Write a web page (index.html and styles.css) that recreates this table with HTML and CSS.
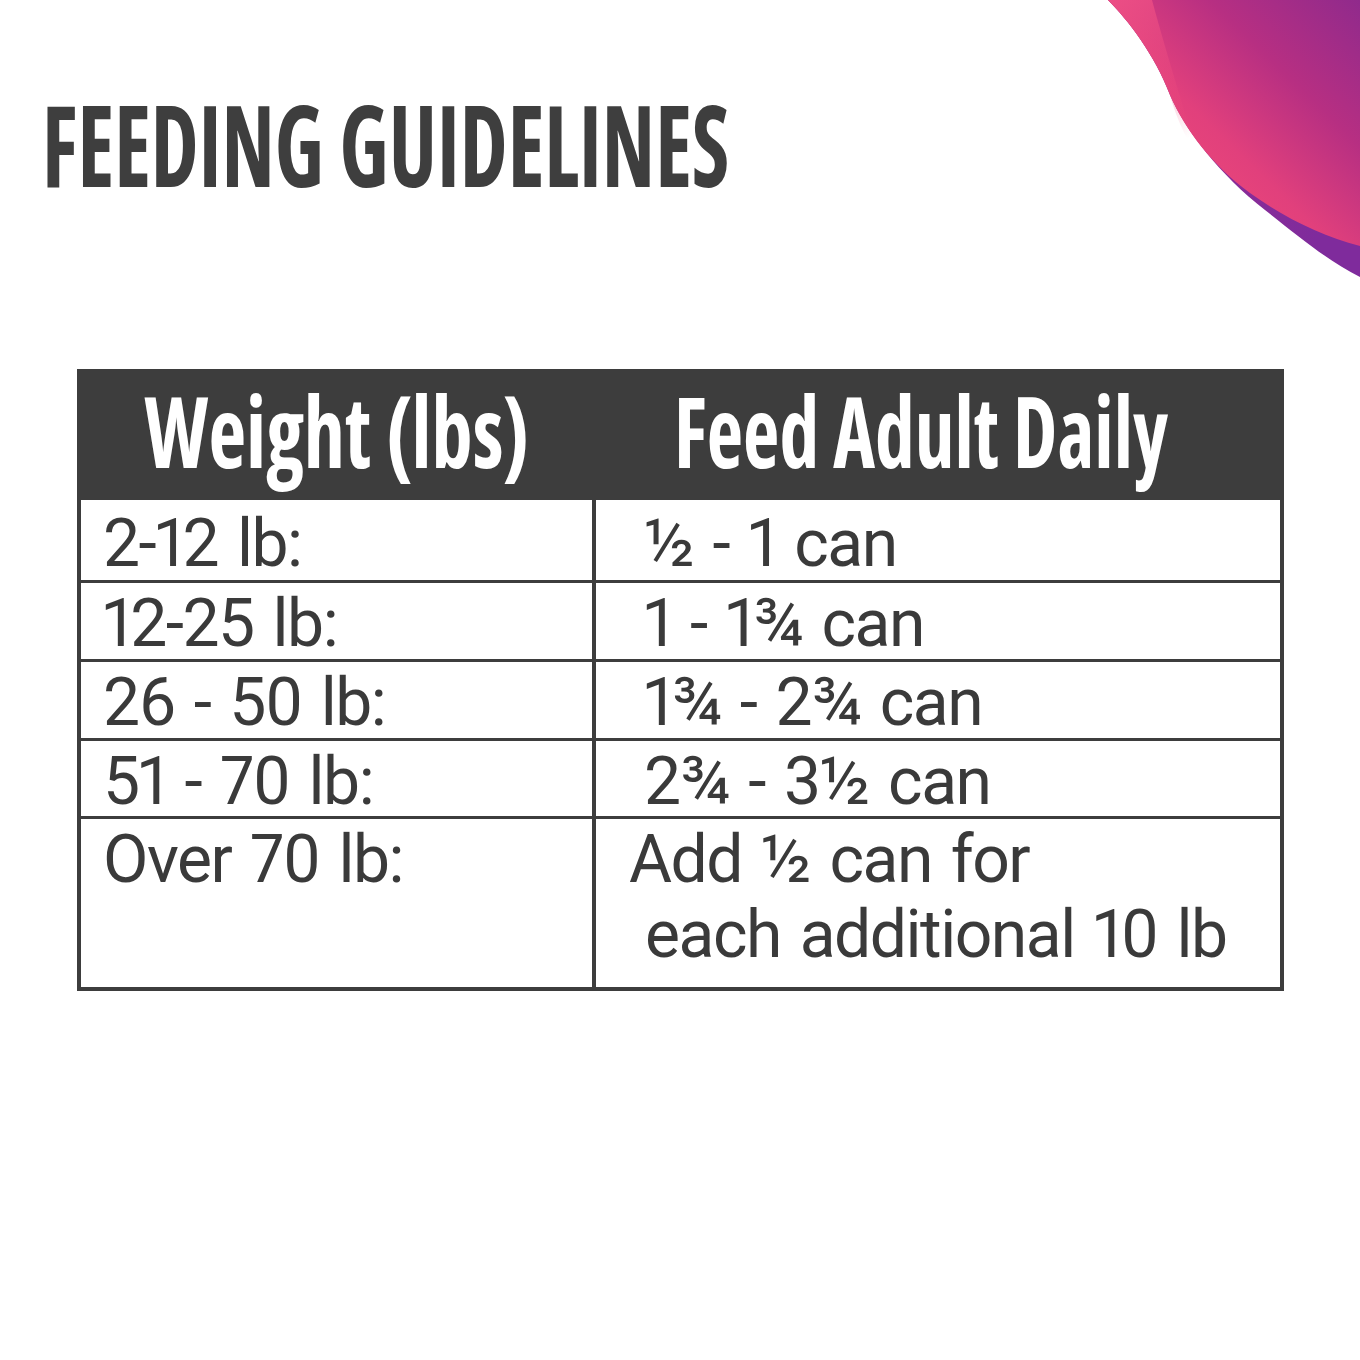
FILE: index.html
```html
<!DOCTYPE html>
<html lang="en">
<head>
<meta charset="utf-8">
<title>Feeding Guidelines</title>
<link rel="stylesheet" href="styles.css">
</head>
<body>
<svg class="swoosh" viewBox="0 0 280 290" width="280" height="290" aria-hidden="true">
  <defs>
    <linearGradient id="pinkGrad" x1="0.15" y1="0.85" x2="1" y2="0">
      <stop offset="0" stop-color="#f24c78"/>
      <stop offset="0.35" stop-color="#e1407c"/>
      <stop offset="0.65" stop-color="#b72f82"/>
      <stop offset="1" stop-color="#902a8c"/>
    </linearGradient>
    <linearGradient id="purpleGrad" x1="0" y1="0" x2="1" y2="0.3">
      <stop offset="0" stop-color="#9b2e8e"/>
      <stop offset="1" stop-color="#7f2b9c"/>
    </linearGradient>
    <linearGradient id="lightGrad" x1="0" y1="0" x2="0.4" y2="1">
      <stop offset="0" stop-color="#ee5086" stop-opacity="0.9"/>
      <stop offset="1" stop-color="#ee4a7c" stop-opacity="0"/>
    </linearGradient>
  </defs>
  <path d="M28,0 C48,20 75,55 90,95 C105,130 140,175 185,210 C220,238 250,262 280,277 L280,0 Z" fill="url(#purpleGrad)"/>
  <path d="M28,0 C48,20 75,55 90,95 C105,130 133,166 170,193 C205,218 242,236 280,246 L280,0 Z" fill="url(#pinkGrad)"/>
  <path d="M28,0 L72,0 C80,30 92,70 104,110 C112,135 120,150 128,165 C112,150 100,130 90,95 C75,55 48,20 28,0 Z" fill="url(#lightGrad)"/>
</svg>

<main class="page">
  <h1 class="title"><span class="title-text">FEEDING GUIDELINES</span></h1>

  <div class="chart">
    <div class="head"><span class="head-text">Weight (lbs)</span></div>
    <div class="head head-right"><span class="head-text head-text-narrow">Feed Adult Daily</span></div>

    <div class="cell weight row-first">2-12 lb:</div>
    <div class="cell amount row-first">½ - 1 can</div>

    <div class="cell weight">12-25 lb:</div>
    <div class="cell amount">1 - 1¾ can</div>

    <div class="cell weight">26 - 50 lb:</div>
    <div class="cell amount">1¾ - 2¾ can</div>

    <div class="cell weight">51 - 70 lb:</div>
    <div class="cell amount">2¾ - 3½ can</div>

    <div class="cell weight">Over 70 lb:</div>
    <div class="cell amount amount-wide">
      <span class="line">Add ½ can for</span>
      <span class="line line-indent">each additional 10 lb</span>
    </div>
  </div>
</main>
</body>
</html>
```
FILE: styles.css
```css
html, body {
  margin: 0;
  padding: 0;
  background: #ffffff;
}

body {
  position: relative;
  width: 1360px;
  height: 1360px;
  overflow: hidden;
  font-family: Roboto, "Liberation Sans", sans-serif;
  color: #3b3b3b;
}

.swoosh {
  position: absolute;
  top: 0;
  right: 0;
  display: block;
}

.page {
  display: flex;
  flex-direction: column;
  align-items: flex-start;
}

.title {
  margin: 88px 0 0 0;
  padding-left: 42px;
  font-family: "Open Sans", "Liberation Sans", sans-serif;
  font-weight: 700;
  font-stretch: 75%;
  font-size: 112px;
  line-height: 112px;
  color: #3e3e3e;
  white-space: nowrap;
}

.title-text {
  display: inline-block;
  transform: scaleX(0.766);
  transform-origin: left center;
}

.chart {
  margin: 169px 0 0 77px;
  display: grid;
  grid-template-columns: 511px 684px;
  grid-template-rows: 124px 80px 76px 76px 75px 168px;
  gap: 3px 4px;
  background: #3d3d3d;
  border: 4px solid #3d3d3d;
}

.head {
  background: #3d3d3d;
  color: #ffffff;
  font-family: "Open Sans", "Liberation Sans", sans-serif;
  font-weight: 700;
  font-stretch: 75%;
  font-size: 98px;
  line-height: 98px;
  padding-top: 8px;
  text-align: center;
  white-space: nowrap;
}

.head-right {
  padding-right: 34px;
}

.head-text {
  display: inline-block;
  transform: scaleX(0.84);
  transform-origin: center center;
}

.head-text-narrow {
  transform: scaleX(0.81);
}

.cell {
  background: #ffffff;
  font-size: 66px;
  letter-spacing: -1.5px;
  word-spacing: 4px;
  font-variant-numeric: proportional-nums;
  line-height: 75px;
  padding-top: 3px;
  white-space: nowrap;
  color: #3a3a3a;
}

.row-first {
  padding-top: 6px;
}

.weight {
  padding-left: 22px;
}

.amount {
  padding-left: 48px;
}

.amount-wide {
  padding-left: 33px;
}

.line {
  display: block;
}

.line-indent {
  padding-left: 16px;
}
```
